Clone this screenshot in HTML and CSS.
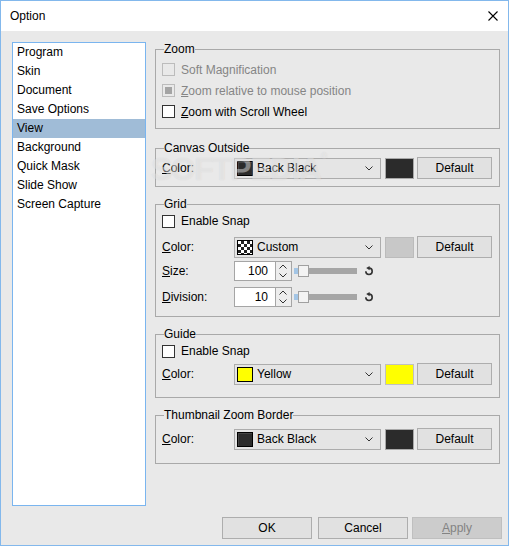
FILE: index.html
```html
<!DOCTYPE html>
<html>
<head>
<meta charset="utf-8">
<title>Option</title>
<link rel="stylesheet" href="styles.css">
</head>
<body>
<div class="window">
  <div class="titlebar">
    <span class="title">Option</span>
    <svg class="close" width="10" height="10" viewBox="0 0 10 10"><path d="M0.5 0.5 L9.5 9.5 M9.5 0.5 L0.5 9.5" stroke="#000" stroke-width="1.1" fill="none"/></svg>
  </div>
  <div class="main">
    <ul class="list">
      <li>Program</li>
      <li>Skin</li>
      <li>Document</li>
      <li>Save Options</li>
      <li class="selected">View</li>
      <li>Background</li>
      <li>Quick Mask</li>
      <li>Slide Show</li>
      <li>Screen Capture</li>
    </ul>
    <div class="panel">
      <fieldset class="group g-zoom">
        <legend>Zoom</legend>
        <div class="gbody">
          <div class="check disabled"><span class="cb"></span><span>Soft Magnification</span></div>
          <div class="check disabled"><span class="cb mixed"></span><span><u>Z</u>oom relative to mouse position</span></div>
          <div class="check"><span class="cb"></span><span><u>Z</u>oom with Scroll Wheel</span></div>
        </div>
      </fieldset>

      <fieldset class="group g-canvas">
        <legend>Canvas Outside</legend>
        <div class="gbody">
          <div class="field">
            <span class="lbl"><u>C</u>olor:</span>
            <div class="combo"><span class="icon icon-black"></span><span class="name">Back Black</span><svg class="chev" width="8" height="5" viewBox="0 0 8 5"><polyline points="0.5,0.5 4,4 7.5,0.5" fill="none" stroke="#333" stroke-width="1"/></svg></div>
            <span class="swatch sw-black"></span>
            <button class="btn">Default</button>
          </div>
        </div>
      </fieldset>

      <fieldset class="group g-grid">
        <legend>Grid</legend>
        <div class="gbody">
          <div class="check snap"><span class="cb"></span><span>Enable Snap</span></div>
          <div class="field f-color">
            <span class="lbl"><u>C</u>olor:</span>
            <div class="combo"><span class="icon icon-checker"></span><span class="name">Custom</span><svg class="chev" width="8" height="5" viewBox="0 0 8 5"><polyline points="0.5,0.5 4,4 7.5,0.5" fill="none" stroke="#333" stroke-width="1"/></svg></div>
            <span class="swatch sw-gray"></span>
            <button class="btn">Default</button>
          </div>
          <div class="field f-size">
            <span class="lbl"><u>S</u>ize:</span>
            <div class="spin">
              <span class="edit">100</span>
              <span class="arrows">
                <svg width="14" height="9" viewBox="0 0 14 9"><polyline points="3.5,6.5 7,3 10.5,6.5" fill="none" stroke="#333" stroke-width="1"/></svg>
                <svg width="14" height="9" viewBox="0 0 14 9"><polyline points="3.5,2.5 7,6 10.5,2.5" fill="none" stroke="#333" stroke-width="1"/></svg>
              </span>
            </div>
            <div class="slider"><span class="fill"></span><span class="thumb"></span><span class="track"></span></div>
            <svg class="reset" width="10" height="10" viewBox="0 0 10 10"><path d="M1.8 5.3 A3.2 3.2 0 1 0 5 2.1" fill="none" stroke="#333" stroke-width="1.6"/><polygon points="2.2,2.1 5.6,0 5.6,4.2" fill="#333"/></svg>
          </div>
          <div class="field f-div">
            <span class="lbl"><u>D</u>ivision:</span>
            <div class="spin">
              <span class="edit">10</span>
              <span class="arrows">
                <svg width="14" height="9" viewBox="0 0 14 9"><polyline points="3.5,6.5 7,3 10.5,6.5" fill="none" stroke="#333" stroke-width="1"/></svg>
                <svg width="14" height="9" viewBox="0 0 14 9"><polyline points="3.5,2.5 7,6 10.5,2.5" fill="none" stroke="#333" stroke-width="1"/></svg>
              </span>
            </div>
            <div class="slider"><span class="fill"></span><span class="thumb"></span><span class="track"></span></div>
            <svg class="reset" width="10" height="10" viewBox="0 0 10 10"><path d="M1.8 5.3 A3.2 3.2 0 1 0 5 2.1" fill="none" stroke="#333" stroke-width="1.6"/><polygon points="2.2,2.1 5.6,0 5.6,4.2" fill="#333"/></svg>
          </div>
        </div>
      </fieldset>

      <fieldset class="group g-guide">
        <legend>Guide</legend>
        <div class="gbody">
          <div class="check snap"><span class="cb"></span><span>Enable Snap</span></div>
          <div class="field f-gcolor">
            <span class="lbl"><u>C</u>olor:</span>
            <div class="combo"><span class="icon icon-yellow"></span><span class="name">Yellow</span><svg class="chev" width="8" height="5" viewBox="0 0 8 5"><polyline points="0.5,0.5 4,4 7.5,0.5" fill="none" stroke="#333" stroke-width="1"/></svg></div>
            <span class="swatch sw-yellow"></span>
            <button class="btn">Default</button>
          </div>
        </div>
      </fieldset>

      <fieldset class="group g-thumb">
        <legend>Thumbnail Zoom Border</legend>
        <div class="gbody">
          <div class="field">
            <span class="lbl"><u>C</u>olor:</span>
            <div class="combo"><span class="icon icon-black"></span><span class="name">Back Black</span><svg class="chev" width="8" height="5" viewBox="0 0 8 5"><polyline points="0.5,0.5 4,4 7.5,0.5" fill="none" stroke="#333" stroke-width="1"/></svg></div>
            <span class="swatch sw-black"></span>
            <button class="btn">Default</button>
          </div>
        </div>
      </fieldset>
    </div>
  </div>
  <div class="footer">
    <button class="fbtn">OK</button>
    <button class="fbtn cancel">Cancel</button>
    <button class="fbtn apply"><u>A</u>pply</button>
  </div>
  <div class="watermark">SOFTPEDIA<span class="reg">®</span></div>
</div>
</body>
</html>
```

FILE: styles.css
```css
* { box-sizing: border-box; }

body {
  margin: 0;
  font-family: "Liberation Sans", Arial, sans-serif;
  font-size: 12px;
  color: #000;
}

.window {
  position: relative;
  width: 509px;
  height: 546px;
  border: 1px solid #83b8ec;
  background: #e9e9e9;
  display: flex;
  flex-direction: column;
  overflow: hidden;
}

.titlebar {
  height: 30px;
  flex: none;
  background: #fff;
  display: flex;
  align-items: center;
  justify-content: space-between;
  padding: 0 10px 0 9px;
}

.close { display: block; }

.main {
  display: flex;
  height: 475px;
  flex: none;
  padding: 11px 0 0 11px;
}

.list {
  margin: 0;
  padding: 0;
  list-style: none;
  width: 134px;
  height: 464px;
  border: 1px solid #7ab5ef;
  background: #fff;
  flex: none;
}

.list li {
  height: 19px;
  line-height: 19px;
  padding-left: 4px;
}

.list li.selected { background: #a0bcd7; }

.panel {
  margin-left: 9px;
  width: 345px;
  display: flex;
  flex-direction: column;
}

.group {
  margin: 0;
  padding: 0;
  border: 1px solid #a9a9a9;
  min-width: 0;
}

.group legend {
  margin-left: 8px;
  padding: 0;
  line-height: 15px;
}

.gbody { padding-left: 6px; }

.g-zoom .gbody { padding-top: 2px; padding-bottom: 6px; }
.g-canvas { margin-top: 12px; }
.g-canvas .gbody { padding-top: 1px; padding-bottom: 7px; }
.g-grid { margin-top: 10px; }
.g-grid .gbody { padding-bottom: 9px; }
.g-guide { margin-top: 10px; }
.g-guide .gbody { padding-bottom: 12px; }
.g-thumb { margin-top: 10px; }
.g-thumb .gbody { padding-top: 5px; padding-bottom: 13px; }

.check {
  display: flex;
  align-items: center;
  height: 21px;
}

.check.snap { height: 18px; }

.cb {
  width: 13px;
  height: 13px;
  border: 1px solid #333;
  background: #fff;
  margin-right: 6px;
  flex: none;
  display: flex;
  align-items: center;
  justify-content: center;
}

.check.disabled { color: #858585; }
.check.disabled .cb { border-color: #bcbcbc; background: #e9e9e9; }
.cb.mixed::after {
  content: "";
  width: 7px;
  height: 7px;
  background: #a4a4a4;
}

.field {
  display: flex;
  align-items: center;
  height: 22px;
}

.f-color { margin-top: 6px; }
.f-gcolor { margin-top: 3px; }
.f-size { margin-top: 3px; height: 20px; }
.f-div { margin-top: 6px; height: 20px; }

.lbl { width: 72px; flex: none; }

.combo {
  width: 147px;
  height: 21px;
  border: 1px solid #acacac;
  background: #e5e5e5;
  display: flex;
  align-items: center;
  padding-left: 2px;
  flex: none;
}

.icon {
  width: 16px;
  height: 15px;
  margin-right: 4px;
  border: 1px solid #000;
  flex: none;
}

.icon-black {
  background: #2b2b2b;
  box-shadow: inset 1px 1px 0 #444;
}

.icon-yellow { background: #ffff00; }

.icon-checker {
  background-color: #fff;
  background-image: conic-gradient(#222 25%, #fff 25% 50%, #222 50% 75%, #fff 75%);
  background-size: 6px 6px;
}

.combo .name { flex: 1; }
.combo .chev { margin-right: 7px; display: block; }

.swatch {
  width: 29px;
  height: 21px;
  margin-left: 4px;
  border: 1px solid #a8a8a8;
  flex: none;
}

.sw-black { background: #2b2b2b; }
.sw-gray { background: #c8c8c8; border-color: #bbbbbb; }
.sw-yellow { background: #ffff00; border-color: #c0c0c0; }

.btn {
  width: 75px;
  height: 22px;
  margin-left: 3px;
  border: 1px solid #adadad;
  background: #e1e1e1;
  font: inherit;
  color: #000;
  padding: 0;
  flex: none;
}

.spin {
  display: flex;
  height: 20px;
  flex: none;
}

.spin .edit {
  width: 42px;
  height: 20px;
  border: 1px solid #a5a5a5;
  background: #fff;
  text-align: right;
  padding-right: 7px;
  line-height: 18px;
}

.spin .arrows {
  width: 16px;
  height: 20px;
  border: 1px solid #a5a5a5;
  border-left: none;
  background: #ededed;
  display: flex;
  flex-direction: column;
}

.spin .arrows svg { display: block; }

.slider {
  display: flex;
  align-items: center;
  width: 63px;
  margin-left: 2px;
  height: 20px;
  flex: none;
}

.slider .fill { width: 4px; height: 6px; background: #a3c5e5; }
.slider .thumb {
  width: 11px;
  height: 12px;
  border: 1px solid #a0a0a0;
  background: #f3f3f3;
}
.slider .track { flex: 1; height: 6px; background: #a6a6a6; }

.reset { margin-left: 7px; display: block; }

.footer {
  display: flex;
  justify-content: flex-end;
  margin-top: 11px;
  padding-right: 6px;
}

.fbtn {
  width: 90px;
  height: 22px;
  border: 1px solid #adadad;
  background: #e1e1e1;
  font: inherit;
  color: #000;
  padding: 0;
}

.fbtn.cancel { margin-left: 6px; }
.fbtn.apply {
  margin-left: 4px;
  background: #cccccc;
  border-color: #bfbfbf;
  color: #838383;
}

.watermark {
  position: absolute;
  left: 150px;
  top: 150px;
  font-family: "Liberation Sans", Arial, sans-serif;
  font-weight: bold;
  font-size: 32px;
  letter-spacing: -1.5px;
  color: rgba(255, 255, 255, 0.35);
  text-shadow: 0 0 1px rgba(150, 150, 150, 0.25);
  pointer-events: none;
}

.watermark .reg { font-size: 9px; vertical-align: top; letter-spacing: 0; }
```
